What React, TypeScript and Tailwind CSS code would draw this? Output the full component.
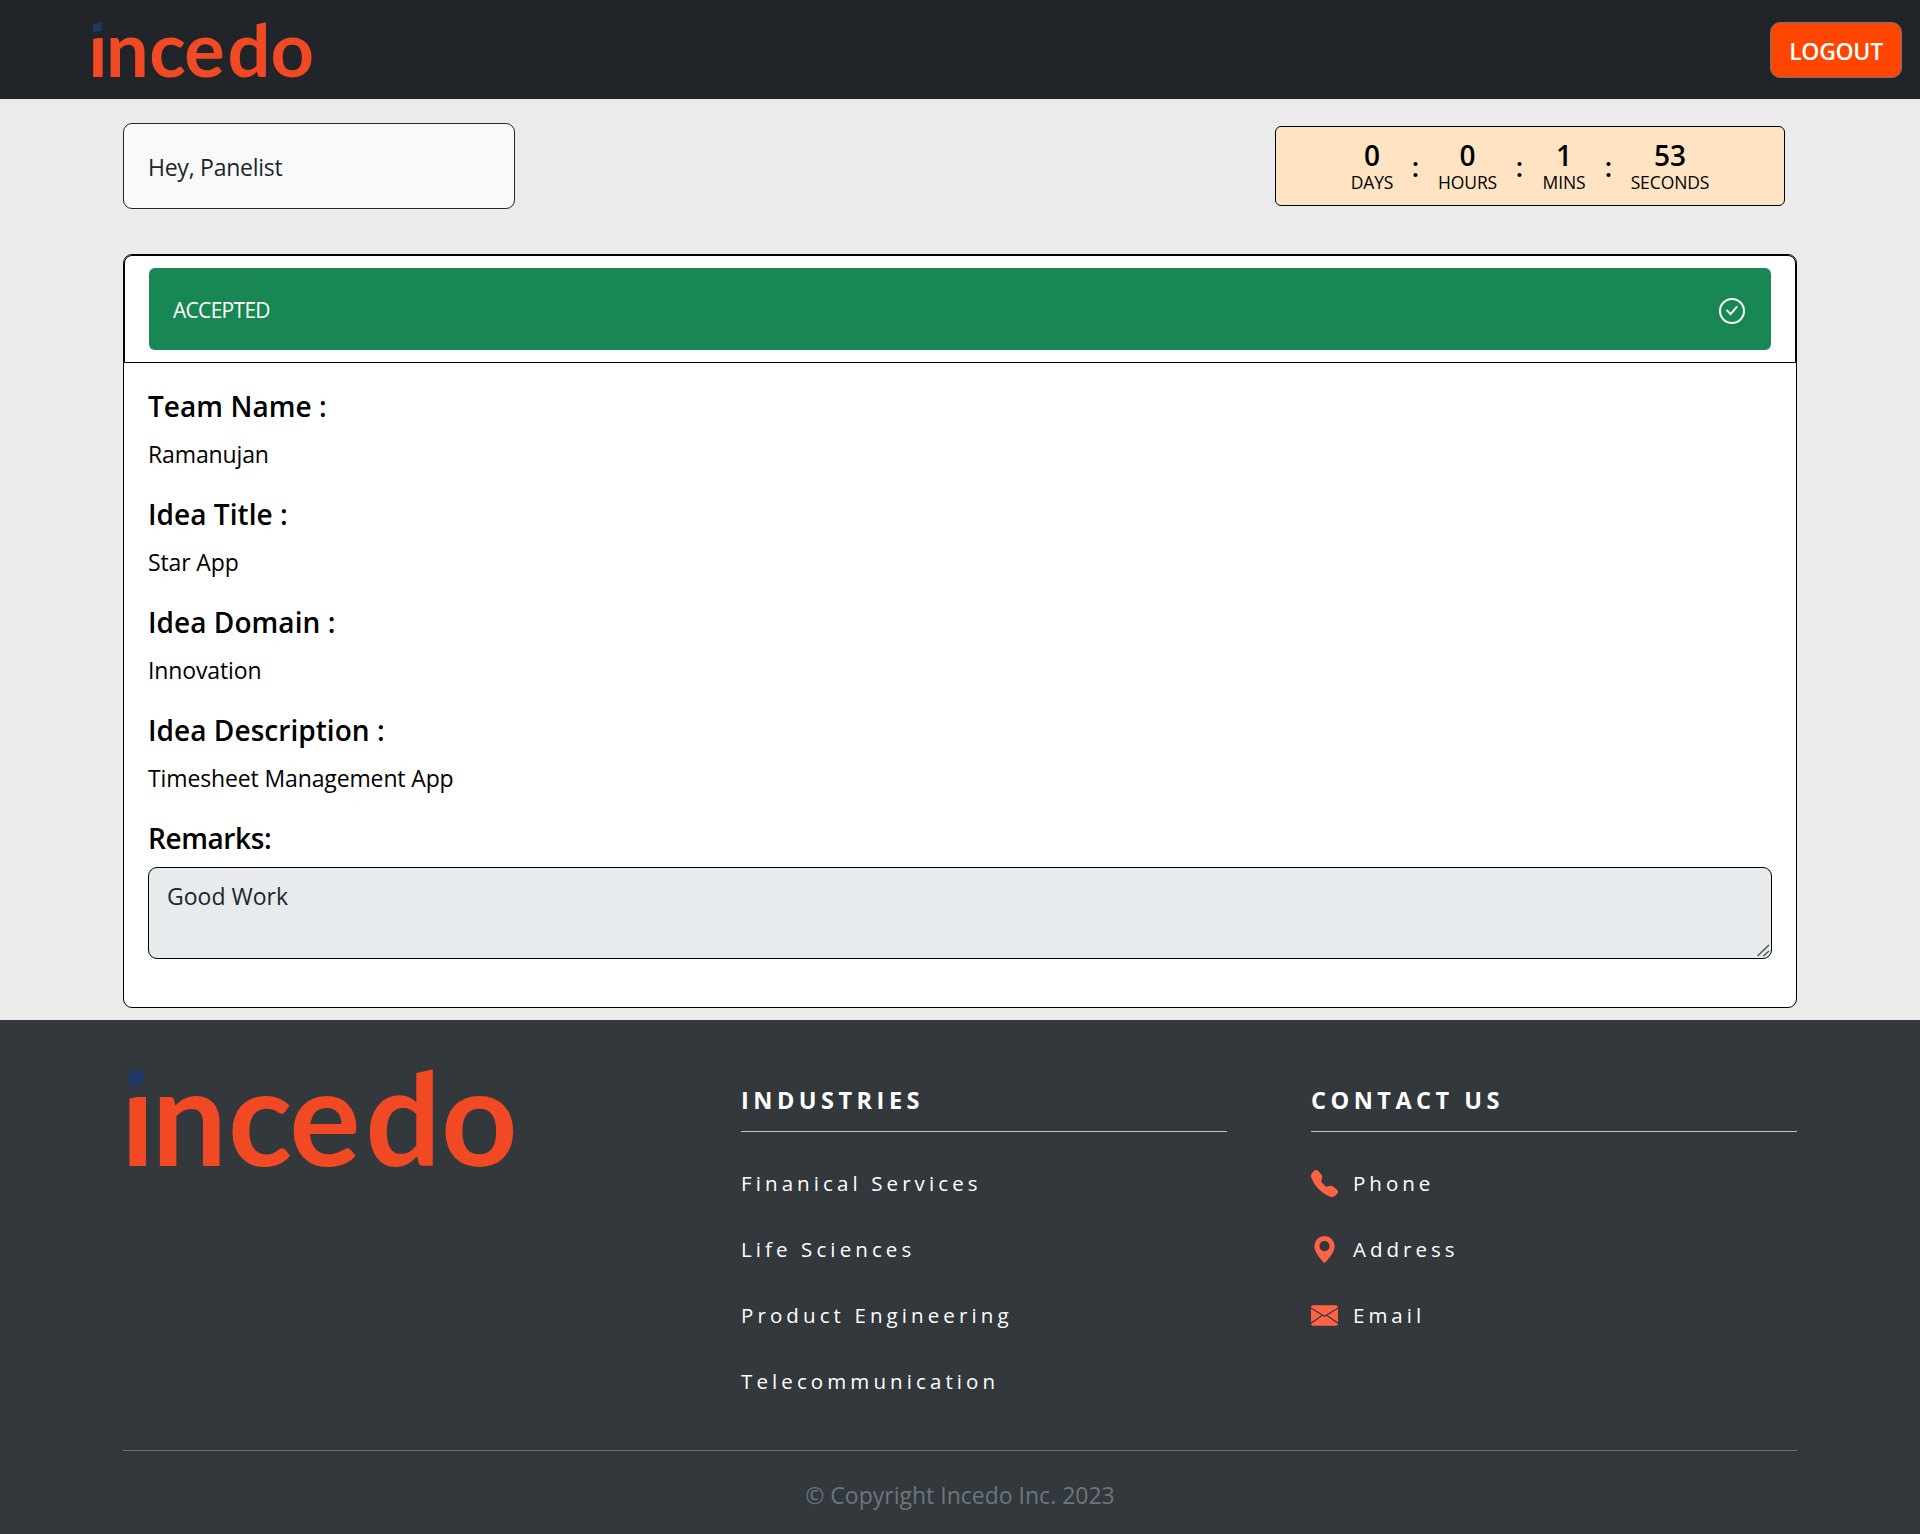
import { BsGeoAltFill, BsTelephoneFill } from "react-icons/bs";

function Logo({ className, id }: { className: string; id: string }) {
  return (
    <svg viewBox="0 0 1155 294" className={className} role="img" aria-label="incedo">
      <clipPath id={id}>
        <path d="M-20 94 L60 76 H860 V13 L930 -3 V76 H1200 V320 H-20 Z" />
      </clipPath>
      <path d="M0 10 L46 0 V44 L0 53 Z" fill="#1f3864" />
      <text
        x="-25 68 297 481 709 936"
        y="290"
        fontFamily="Lato"
        fontWeight="700"
        fontSize="400"
        fill="#f04923"
        clipPath={`url(#${id})`}
      >
        incedo
      </text>
    </svg>
  );
}

function AcceptedIcon() {
  return (
    <svg viewBox="0 0 26 26" className="mt-[4px] size-[26px]" fill="none" stroke="currentColor">
      <circle cx="13" cy="13" r="12" strokeWidth="2" />
      <path d="M8 12.4 L11.6 16.2 L17.8 8.9" strokeWidth="1.9" strokeLinecap="round" />
    </svg>
  );
}

function EnvelopeIcon({ className }: { className: string }) {
  return (
    <svg viewBox="0 0 27 27" className={className}>
      <rect x="0" y="3.3" width="27" height="20.4" rx="2" fill="currentColor" />
      <path
        d="M-0.5 5.8 L13.5 14.3 L27.5 5.8 M-0.5 21.6 L11 13.4 M16 13.4 L27.5 21.6"
        fill="none"
        stroke="#33383c"
        strokeWidth="1.2"
      />
    </svg>
  );
}

const timer = [
  { value: "0", label: "DAYS", width: "w-[44px]" },
  { value: "0", label: "HOURS", width: "w-[61px]" },
  { value: "1", label: "MINS", width: "w-[46px]" },
  { value: "53", label: "SECONDS", width: "w-[80px]" },
];

const details = [
  { title: "Team Name :", value: "Ramanujan" },
  { title: "Idea Title :", value: "Star App" },
  { title: "Idea Domain :", value: "Innovation" },
  { title: "Idea Description :", value: "Timesheet Management App" },
];

const industries = ["Finanical Services", "Life Sciences", "Product Engineering", "Telecommunication"];

const contacts = [
  { Icon: BsTelephoneFill, label: "Phone" },
  { Icon: BsGeoAltFill, label: "Address" },
  { Icon: EnvelopeIcon, label: "Email" },
];

function FooterHeading({ children }: { children: string }) {
  return (
    <h2 className="h-[49px] border-b border-[#c2c4c5] text-[23.5px] font-bold leading-[34px] tracking-[4.5px]">
      {children}
    </h2>
  );
}

export default function App() {
  return (
    <div className="flex h-[1534px] w-[1920px] flex-col bg-[#ebebeb] font-['Open_Sans',sans-serif] text-black">
      <header className="flex h-[99px] shrink-0 items-start justify-between bg-[#212529] pt-[22px] pr-[18px] pl-[93px]">
        <Logo id="header-mark" className="h-[56px] w-[219px] overflow-visible" />
        <button className="h-[56px] w-[132px] rounded-[10px] border border-[#6c757d] bg-[#ff4500] pt-[2px] text-[23px] font-semibold tracking-[-0.3px] text-white">
          LOGOUT
        </button>
      </header>

      <main className="flex h-[921px] shrink-0 flex-col px-[123px]">
        <div className="mt-6 flex h-[86px] justify-between">
          <div className="flex w-[392px] items-center rounded-[9px] border border-[#212529] bg-[#f8f9fa] pl-6 text-[23px] tracking-[-0.25px] text-[#212529]">
            <span className="pt-[3px]">Hey, Panelist</span>
          </div>
          <div className="mt-[3px] mr-3 flex h-[80px] w-[510px] justify-center rounded-[6px] border border-black bg-[#ffe4c4]">
            {timer.map(({ value, label, width }, i) => (
              <div key={label} className="flex">
                {i > 0 && (
                  <span className="w-[43px] pt-[20px] text-center text-[27px] font-semibold leading-[40px]">:</span>
                )}
                <div className={`flex flex-col items-center pt-[12px] ${width}`}>
                  <span className="text-[28px] font-semibold leading-[32px]">{value}</span>
                  <span className="mt-px text-[17.5px] leading-[20px] tracking-[-0.1px]">{label}</span>
                </div>
              </div>
            ))}
          </div>
        </div>

        <section className="mt-[45px] flex h-[754px] flex-col rounded-[9px] border border-black bg-white">
          <div className="h-[108px] rounded-t-[8px] border border-black px-6 pt-3">
            <div className="flex h-[82px] items-center justify-between rounded-[6px] bg-[#198754] pr-[26px] pl-6 text-white">
              <span className="pt-[3px] text-[21px] tracking-[-0.7px]">ACCEPTED</span>
              <AcceptedIcon />
            </div>
          </div>
          <div className="flex flex-col px-6 pt-[23px]">
            {details.map(({ title, value }) => (
              <div key={title} className="h-[108px]">
                <h3 className="text-[28px] font-semibold leading-[40px] tracking-[0.05px]">{title}</h3>
                <p className="mt-[10px] text-[23px] leading-[36px] tracking-[-0.13px]">{value}</p>
              </div>
            ))}
            <h3 className="text-[28px] font-semibold leading-[40px] tracking-[-0.4px]">Remarks:</h3>
            <div className="relative mt-[9px] h-[92px]">
              <textarea
                readOnly
                defaultValue="Good Work"
                className="block h-[92px] w-full resize-none overflow-hidden rounded-[9px] border border-black bg-[#e7ebee] px-[18px] pt-[10px] text-[23px] leading-[36px] text-[#212529] outline-none"
              />
              <svg
                viewBox="0 0 14 14"
                className="absolute right-[2px] bottom-[2px] size-[14px]"
                fill="none"
                stroke="#555"
                strokeWidth="1.5"
              >
                <path d="M1.5 13 L13 2 M7.5 13 L13 8" />
              </svg>
            </div>
          </div>
        </section>
      </main>

      <footer className="flex flex-1 flex-col bg-[#33383c] px-[123px] text-white">
        <div className="grid h-[431px] grid-cols-[534px_486px_486px] gap-x-[84px] border-b border-[#6a6e71]">
          <div className="pt-[49px] pl-[6px]">
            <Logo id="footer-mark" className="h-[98px] w-[385px] overflow-visible" />
          </div>
          <div className="pt-[63px]">
            <FooterHeading>INDUSTRIES</FooterHeading>
            <ul className="pt-[35px]">
              {industries.map((name) => (
                <li key={name} className="h-[66px] text-[20.5px] leading-[32px] tracking-[4.1px]">
                  {name}
                </li>
              ))}
            </ul>
          </div>
          <div className="pt-[63px]">
            <FooterHeading>CONTACT US</FooterHeading>
            <ul className="pt-[35px]">
              {contacts.map(({ Icon, label }) => (
                <li key={label} className="flex h-[66px] gap-[15px] text-[20.5px] leading-[32px] tracking-[4px]">
                  <Icon className="mt-[3px] size-[27px] text-[#ff6347]" />
                  {label}
                </li>
              ))}
            </ul>
          </div>
        </div>
        <p className="pt-[26px] text-center text-[23px] leading-[36px] text-[#6c757d]">
          © Copyright Incedo Inc. 2023
        </p>
      </footer>
    </div>
  );
}
